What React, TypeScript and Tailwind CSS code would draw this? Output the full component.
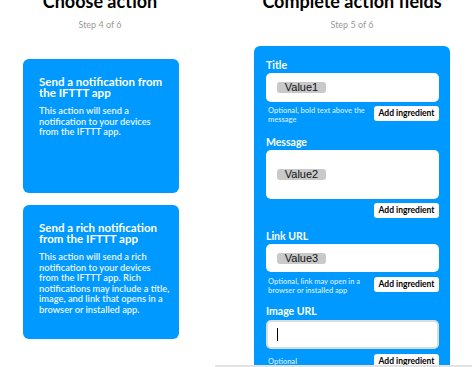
import React from "react";

const font = { fontFamily: "Lato, 'Noto Sans', sans-serif" };

function AddBtn() {
  return (
    <div className="flex h-[15px] w-[65px] shrink-0 items-center justify-center rounded-[3px] bg-white text-[8.5px] font-bold text-black">
      Add ingredient
    </div>
  );
}

function Chip({ label }: { label: string }) {
  return (
    <span
      className="inline-flex h-[11px] w-[49px] items-center justify-center rounded-[3px] bg-[#c9c9c9] text-[11px] text-[#111]"
      style={{ fontFamily: "'Liberation Sans', Arial, sans-serif" }}
    >
      {label}
    </span>
  );
}

function Card({ title, body }: { title: string; body: string }) {
  return (
    <div className="ml-[23px] h-[134px] w-[156px] rounded-[6px] bg-[#0099ff] pl-[16px] pr-[9px] pt-[17px] text-white">
      <div className="w-[125px] text-[11.5px] font-bold leading-[11px]">{title}</div>
      <div className="mt-[8px] text-[9.3px] font-semibold leading-[10.5px] text-[#eaf6ff]">{body}</div>
    </div>
  );
}

export default function App() {
  return (
    <div className="relative h-[367px] w-[472px] overflow-hidden bg-white" style={font}>
      <div className="mt-[-10px] flex">
        {/* Left column */}
        <div className="flex w-[200px] flex-col">
          <div className="text-center text-[18px] font-bold leading-[22px] text-black">Choose action</div>
          <div className="mt-[7px] text-center text-[9px] leading-[12px] text-[#999]">Step 4 of 6</div>
          <div className="mt-[28px]">
            <Card
              title="Send a notification from the IFTTT app"
              body="This action will send a notification to your devices from the IFTTT app."
            />
          </div>
          <div className="mt-[12px]">
            <Card
              title="Send a rich notification from the IFTTT app"
              body="This action will send a rich notification to your devices from the IFTTT app. Rich notifications may include a title, image, and link that opens in a browser or installed app."
            />
          </div>
        </div>

        {/* Right column */}
        <div className="flex w-[272px] flex-col">
          <div className="ml-[34px] w-[236px] whitespace-nowrap text-center text-[18px] font-bold leading-[22px] text-black">
            Complete action fields
          </div>
          <div className="ml-[34px] mt-[7px] w-[236px] text-center text-[9px] leading-[12px] text-[#999]">Step 5 of 6</div>
          <div className="ml-[54px] mt-[15px] h-[340px] w-[196px] rounded-t-[6px] bg-[#0099ff] px-[12px] pt-[13px] text-white">
            <div className="text-[10.5px] font-bold leading-[12px]">Title</div>
            <div className="mt-[2px] flex h-[29px] w-[173px] items-center rounded-[5px] bg-white px-[11px]">
              <Chip label="Value1" />
            </div>
            <div className="mt-[4px] flex h-[30px] w-[173px] justify-between">
              <div className="ml-[2px] w-[104px] text-[7.5px] font-semibold leading-[9px] text-[#cfeaff]">
                Optional, bold text above the message
              </div>
              <AddBtn />
            </div>

            <div className="text-[10.5px] font-bold leading-[12px]">Message</div>
            <div className="mt-[2px] h-[49px] w-[173px] rounded-[5px] bg-white px-[11px] pt-[10px]">
              <Chip label="Value2" />
            </div>
            <div className="mt-[4px] flex h-[27px] w-[173px] justify-end">
              <AddBtn />
            </div>

            <div className="text-[10.5px] font-bold leading-[12px]">Link URL</div>
            <div className="mt-[2px] flex h-[28px] w-[173px] items-center rounded-[5px] bg-white px-[11px]">
              <Chip label="Value3" />
            </div>
            <div className="mt-[5px] flex h-[28px] w-[173px] justify-between">
              <div className="ml-[2px] w-[104px] text-[7.5px] font-semibold leading-[9px] text-[#cfeaff]">
                Optional, link may open in a browser or installed app
              </div>
              <AddBtn />
            </div>

            <div className="text-[10.5px] font-bold leading-[12px]">Image URL</div>
            <div className="mt-[3px] flex h-[29px] w-[173px] items-center rounded-[5px] border-2 border-[#dcdcdc] bg-white px-[9px]">
              <div className="h-[13px] w-px bg-black" />
            </div>
            <div className="mt-[5px] flex w-[173px] justify-between">
              <div className="ml-[2px] mt-[3px] text-[7.5px] font-semibold leading-[9px] text-[#cfeaff]">Optional</div>
              <AddBtn />
            </div>
          </div>
        </div>
      </div>
      <div className="absolute bottom-0 left-[215px] right-0 h-[2px] bg-[#e3e3e3]" />
    </div>
  );
}
